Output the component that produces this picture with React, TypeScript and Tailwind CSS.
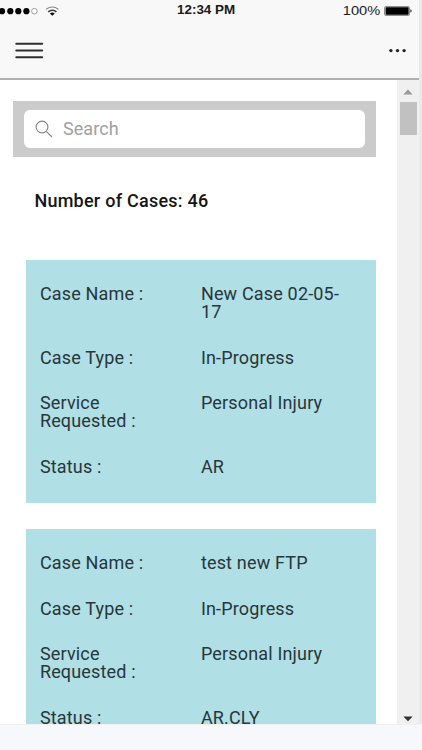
import React from 'react';

interface CaseItem {
  name: string;
  type: string;
  service: string;
  status: string;
}

const cases: CaseItem[] = [
  { name: 'New Case 02-05-17', type: 'In-Progress', service: 'Personal Injury', status: 'AR' },
  { name: 'test new FTP', type: 'In-Progress', service: 'Personal Injury', status: 'AR.CLY' },
];

const StatusBar: React.FC = () => (
  <div className="flex h-[21px] items-center justify-between pr-[6px] font-['Liberation_Sans'] text-[12.5px] leading-none text-[#1a1a1a]">
    <div className="flex w-[130px] items-center">
      <svg width="60" height="14" viewBox="0 0 60 14">
        <circle cx="2" cy="7.2" r="3.1" fill="#000" />
        <circle cx="10.3" cy="7.2" r="3.1" fill="#000" />
        <circle cx="18.3" cy="7.2" r="3.1" fill="#000" />
        <circle cx="26.4" cy="7.2" r="3.1" fill="#000" />
        <circle cx="34.4" cy="7.2" r="2.8" fill="#fff" stroke="#777" strokeWidth="0.7" />
        <g fill="none" stroke="#333">
          <path d="M46.2 5.2 Q52.3 0.8 58.4 5.2" strokeWidth="1.2" stroke="#888" />
          <path d="M48.2 7.8 Q52.3 4.6 56.4 7.8" strokeWidth="1.6" />
        </g>
        <path d="M49.8 9.4 Q52.3 7.6 54.8 9.4 L52.3 11.7 Z" fill="#111" />
      </svg>
    </div>
    <span className="w-[60px] origin-left scale-x-110 whitespace-nowrap text-[12.2px] font-bold">12:34 PM</span>
    <div className="flex w-[130px] items-center justify-end gap-[4px]">
      <span className="origin-right scale-x-[1.16] pt-px text-[12.6px]">100%</span>
      <svg width="29" height="10" viewBox="0 0 29 10">
        <rect x="0.5" y="0.5" width="25" height="9" rx="1.5" fill="#ddd" stroke="#666" strokeWidth="0.7" />
        <rect x="1.6" y="1.3" width="23" height="7.4" rx="0.8" fill="#000" />
        <path d="M26.4 3.3 Q29 5 26.4 6.7 Z" fill="#222" />
      </svg>
    </div>
  </div>
);

const Header: React.FC = () => (
  <header className="h-[80px] shrink-0 border-b-2 border-[#b0b0b0] bg-[#f8f8f8]">
    <StatusBar />
    <div className="flex h-[57px] items-center justify-between pl-[15px] pr-[12px]">
      <svg width="29" height="18" viewBox="0 0 29 18" stroke="#2e2e2e" strokeWidth="2" strokeLinecap="round">
        <path d="M1.3 2.7H27.2M1.3 9.5H27.2M1.3 16.3H27.2" />
      </svg>
      <svg width="19" height="6" viewBox="0 0 19 6" fill="#222">
        <circle cx="2.9" cy="3.6" r="1.7" />
        <circle cx="9.5" cy="3.6" r="1.7" />
        <circle cx="16.1" cy="3.6" r="1.7" />
      </svg>
    </div>
  </header>
);

const Row: React.FC<{ label: string; value: string }> = ({ label, value }) => (
  <div className="flex pb-[27.8px]">
    <div className="w-[161px] shrink-0 pr-[50px]">{label}</div>
    <div className="w-[148px]">{value}</div>
  </div>
);

const CaseCard: React.FC<{ item: CaseItem }> = ({ item }) => (
  <div className="mb-[26px] h-[243px] shrink-0 bg-[#b0dfe5] pl-[13.5px] pt-[25.4px] text-[18px] leading-[18px] tracking-[0.17px] text-[#27363b]">
    <Row label="Case Name :" value={item.name} />
    <Row label="Case Type :" value={item.type} />
    <Row label="Service Requested :" value={item.service} />
    <Row label="Status :" value={item.status} />
  </div>
);

const Scrollbar: React.FC = () => (
  <div className="flex w-[22px] shrink-0 flex-col items-center bg-[#f0f0f0] pt-[9px]">
    <svg width="10" height="6" viewBox="0 0 10 6">
      <path d="M0.3 5.5 L5 0.5 L9.7 5.5 Z" fill="#999" />
    </svg>
    <div className="mt-[7px] h-[33px] w-[17px] bg-[#c1c1c1]"></div>
    <svg className="mb-[2px] mt-auto" width="10" height="6" viewBox="0 0 10 6">
      <path d="M0.3 0.5 H9.7 L5 5.3 Z" fill="#333" />
    </svg>
  </div>
);

const App: React.FC = () => {
  return (
    <div className="flex h-[750px] w-[422px] overflow-hidden bg-white font-['Roboto',sans-serif]">
      <div className="flex w-[419px] flex-col">
        <Header />
        <div className="flex h-[644px] shrink-0 overflow-hidden">
          <main className="flex w-[397px] flex-col pl-[13.4px] pr-[21.4px] pt-[21px]">
            <div className="h-[55.5px] shrink-0 bg-[#cbcbcb] px-[10.5px] py-[8.7px]">
              <div className="flex h-full items-center rounded-[6px] bg-white pl-[11px]">
                <svg width="18" height="18" viewBox="0 0 18 18" fill="none" stroke="#858585" strokeWidth="1.1">
                  <circle cx="7" cy="7" r="5.9" />
                  <path d="M11.2 11.3 L17 17" />
                </svg>
                <span className="ml-[10px] text-[18px] leading-none tracking-[0.12px] text-[#a0a0a0]">Search</span>
              </div>
            </div>
            <h1 className="mb-[48.5px] ml-[21px] mt-[33.5px] text-[18px] font-medium leading-[21px] tracking-[0.25px] text-[#151515]">
              Number of Cases: 46
            </h1>
            <div className="flex flex-col pl-[13px]">
              {cases.map((item) => (
                <CaseCard key={item.name} item={item} />
              ))}
            </div>
          </main>
          <Scrollbar />
        </div>
        <footer className="h-[26px] border-t border-[#eeeeef] bg-[#f7f8fb]"></footer>
      </div>
      <div className="flex w-[3px] flex-col">
        <div className="h-[724px] bg-[#e9e9ec]"></div>
        <div className="h-[26px] bg-[#f7f8fb]"></div>
      </div>
    </div>
  );
};

export default App;
